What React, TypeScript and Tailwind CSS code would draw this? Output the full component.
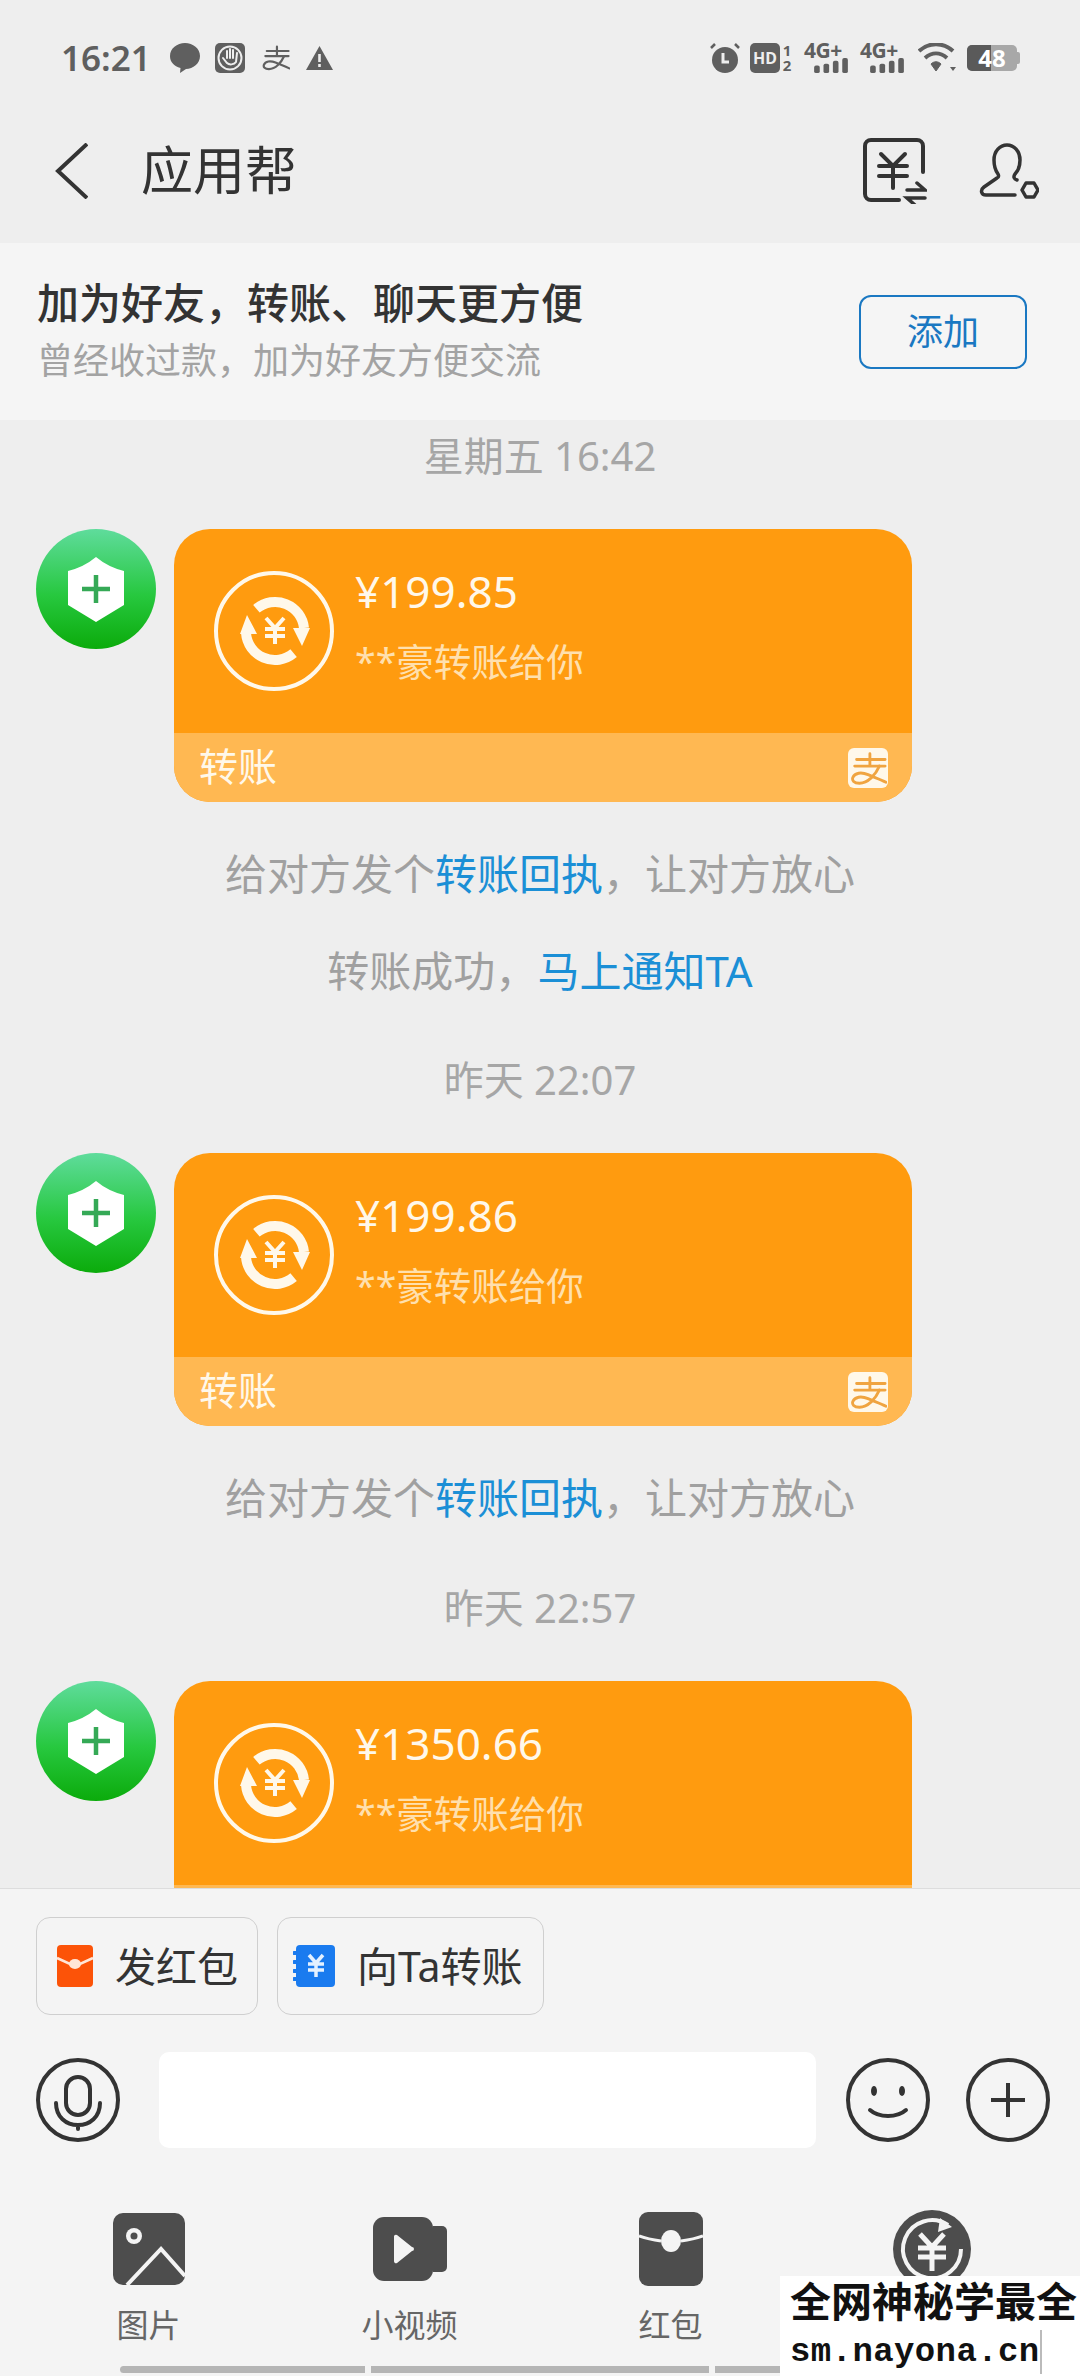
import type { ReactNode } from "react";

const GLYPH = "#5f5f5f";
const INK = "#333333";

function AlipayMark({ color, className }: { color: string; className?: string }) {
  return (
    <svg viewBox="0 0 40 40" className={className} fill="none" stroke={color} strokeLinecap="round">
      <path d="M8 11h30M22 5v13M6 18h32" strokeWidth="3" />
      <path d="M32 18C28 27 20 36 11 36 5 36 3 33 4 30 6 25 13 24 20 27 27 30 33 32 39 35" strokeWidth="3" />
    </svg>
  );
}

function SignalIcon() {
  return (
    <div className="flex h-[30px] w-[45px] flex-col items-start">
      <span className="h-[14px] text-[21px] leading-[14px] font-bold tracking-[-0.5px] text-[#5f5f5f]">4G+</span>
      <svg viewBox="0 0 36 16" className="mt-[1px] ml-[9px] h-[15px] w-[36px]" fill={GLYPH}>
        <rect x="0" y="8" width="6" height="8" rx="2" />
        <rect x="10" y="6" width="6" height="10" rx="2" />
        <rect x="20" y="3" width="6" height="13" rx="2" />
        <rect x="30" y="0" width="6" height="16" rx="2" />
      </svg>
    </div>
  );
}

function StatusBar() {
  return (
    <div className="flex h-[115px] items-center justify-between pr-[60px] pl-[61px]">
      <div className="flex items-center">
        <span className="text-[35px] leading-none font-semibold text-[#5f5f5f]">16:21</span>
        <svg viewBox="0 0 30 30" className="ml-[19px] h-[30px] w-[30px]" fill={GLYPH}>
          <path d="M15 0c8 0 15 5.500 15 13s-7 13-14 13l-6 4 .5-5C4 23 0 19 0 13 0 5.500 7 0 15 0z" />
        </svg>
        <svg viewBox="0 0 30 30" className="ml-[15px] h-[30px] w-[30px]" fill="none">
          <rect width="30" height="30" rx="5" fill={GLYPH} />
          <circle cx="15" cy="15" r="11.500" stroke="#eeeeee" strokeWidth="2" />
          <path
            d="M8 15l4 5c2 2 7 2 9-1l1-9M12 15V8M15 15V6M18 15V7"
            stroke="#eeeeee"
            strokeWidth="2"
            strokeLinecap="round"
          />
        </svg>
        <AlipayMark color={GLYPH} className="ml-[16px] h-[29px] w-[29px]" />
        <svg viewBox="0 0 27 24" className="ml-[16px] h-[24px] w-[27px]">
          <path d="M13.500 0L27 24H0z" fill={GLYPH} />
          <path d="M12.200 8h2.600v8h-2.600zM12.200 18h2.600v3h-2.600z" fill="#eeeeee" />
        </svg>
      </div>
      <div className="flex items-center">
        <svg viewBox="0 0 30 30" className="h-[30px] w-[30px]" fill="none">
          <circle cx="15" cy="17" r="13" fill={GLYPH} />
          <path d="M13 10v9h6" stroke="#eeeeee" strokeWidth="3" />
          <path d="M1 5l4-4M29 5l-4-4" stroke={GLYPH} strokeWidth="2.500" />
        </svg>
        <div className="ml-[10px] flex h-[30px] w-[30px] items-center justify-center rounded-[5px] bg-[#5f5f5f] text-[16px] leading-none font-bold text-[#eeeeee]">
          HD
        </div>
        <div className="ml-[2px] flex w-[10px] flex-col items-center text-[15px] leading-[15px] font-bold text-[#5f5f5f]">
          <span>1</span>
          <span>2</span>
        </div>
        <div className="ml-[12px]">
          <SignalIcon />
        </div>
        <div className="ml-[11px]">
          <SignalIcon />
        </div>
        <svg viewBox="0 0 38 30" className="ml-[13px] h-[30px] w-[38px]" fill="none" stroke={GLYPH}>
          <path d="M1 8c10-9 24-9 34 0" strokeWidth="4" />
          <path d="M7 15c7-6 15-6 22 0" strokeWidth="4" />
          <path d="M13 21c3-3 7-3 10 0l-5 7z" fill={GLYPH} strokeWidth="1" />
          <path d="M32 24h6l-3 4z" fill={GLYPH} strokeWidth="0" />
        </svg>
        <div className="relative ml-[11px] flex h-[26px] w-[50px] rounded-[5px] bg-[#a8a8a8]">
          <div className="h-full w-[24px] rounded-l-[5px] bg-[#5a5a5a]" />
          <span className="absolute inset-0 flex items-center justify-center text-[24px] leading-none font-bold text-white">
            48
          </span>
        </div>
        <div className="h-[12px] w-[3px] rounded-r-[2px] bg-[#a8a8a8]" />
      </div>
    </div>
  );
}

function Header() {
  return (
    <div className="flex h-[128px] items-center justify-between pr-[41px] pb-[16px] pl-[55px]">
      <div className="flex items-center">
        <svg viewBox="0 0 33 56" className="h-[56px] w-[33px]" fill="none" stroke={INK} strokeWidth="4">
          <path d="M32 1L3 28l29 27" />
        </svg>
        <span className="ml-[53px] pb-[2px] text-[52px] leading-none text-[#333333]">应用帮</span>
      </div>
      <div className="flex items-center">
        <svg
          viewBox="0 0 64 66"
          className="h-[66px] w-[64px]"
          fill="none"
          stroke={INK}
          strokeWidth="4"
          strokeLinecap="round"
        >
          <path d="M36 62H8a6 6 0 0 1-6-6V8a6 6 0 0 1 6-6h46a6 6 0 0 1 6 6v26" />
          <path d="M18 16l12 12 12-12M16 28h28M16 38h28M30 28v22" />
          <path d="M44 52h18l-8-7M62 60H44l8 7" strokeWidth="3.500" />
        </svg>
        <svg
          viewBox="0 0 60 56"
          className="ml-[52px] h-[56px] w-[60px]"
          fill="none"
          stroke={INK}
          strokeWidth="3.500"
          strokeLinecap="round"
          strokeLinejoin="round"
        >
          <path d="M38 37c-3-1-4-3-2-6 3-3 5-8 5-14C41 8 35 2 28 2S15 8 15 17c0 6 1 10 4 14 1 2 1 3-1 4L5 44c-4 3-3 8 2 8h29" />
          <path d="M43 47l4-7h8l4 7-4 7h-8z" />
        </svg>
      </div>
    </div>
  );
}

function FriendBanner() {
  return (
    <div className="flex h-[177px] items-center justify-between bg-[#f5f5f5] pr-[53px] pl-[37px]">
      <div className="flex flex-col">
        <span className="text-[42px] leading-[50px] font-medium text-[#333333]">
          加为好友，转账、聊天更方便
        </span>
        <span className="mt-[8px] text-[36px] leading-[50px] text-[#a3a3a3]">
          曾经收过款，加为好友方便交流
        </span>
      </div>
      <button className="flex h-[74px] w-[168px] items-center justify-center rounded-[12px] border-2 border-[#1a78c2] text-[36px] text-[#1a78c2]">
        添加
      </button>
    </div>
  );
}

function Avatar() {
  return (
    <svg viewBox="0 0 120 120" className="h-[120px] w-[120px] shrink-0">
      <defs>
        <linearGradient id="avatarGreen" x1="0" y1="0" x2="0" y2="1">
          <stop offset="0" stopColor="#5fdc9c" />
          <stop offset="0.55" stopColor="#27c83f" />
          <stop offset="1" stopColor="#0bab0b" />
        </linearGradient>
      </defs>
      <circle cx="60" cy="60" r="60" fill="url(#avatarGreen)" />
      <path d="M60 28Q48 38 32 42V76L60 93 88 76V42Q72 38 60 28z" fill="#ffffff" />
      <path d="M46 60h28M60 46v28" stroke="#35a956" strokeWidth="4.500" />
    </svg>
  );
}

function TransferIcon() {
  return (
    <svg viewBox="0 0 120 120" className="h-[120px] w-[120px] shrink-0" fill="none" stroke="#fff8ea">
      <circle cx="60" cy="60" r="58" strokeWidth="4" />
      <path d="M42.400 37.800A29 29 0 0 1 90 57" strokeWidth="10" />
      <path d="M79.600 82.200A29 29 0 0 1 32 62" strokeWidth="10" />
      <path d="M79 57h17L88 75zM26 63h17L33 44z" fill="#fff8ea" strokeWidth="0" />
      <path d="M52 47l9 10 9-10M51 58h20M51 65h20M61 57v16" strokeWidth="4" />
    </svg>
  );
}

function TransferMessage({ amount, cutOff }: { amount: string; cutOff?: boolean }) {
  return (
    <div className="flex gap-[18px] pl-[36px]">
      <Avatar />
      <div className="w-[738px] overflow-hidden rounded-[36px] bg-[#ff9b0f]">
        <div className="flex h-[204px] items-center pl-[40px]">
          <TransferIcon />
          <div className="ml-[21px] flex flex-col pb-[10px]">
            <span className="text-[44px] leading-[50px] text-[#fff8ea]">{amount}</span>
            <span className="mt-[21px] text-[37.500px] leading-[50px] text-[#ffe0ae]">**豪转账给你</span>
          </div>
        </div>
        <div className="flex h-[69px] items-center justify-between bg-[#ffb852] pr-[24px] pl-[25px]">
          {!cutOff && (
            <>
              <span className="pb-[5px] text-[39px] leading-none text-[#fff8ea]">转账</span>
              <div className="flex h-[40px] w-[40px] items-center justify-center rounded-[6px] bg-[#fff8ea]">
                <AlipayMark color="#f0a440" className="h-[38px] w-[38px]" />
              </div>
            </>
          )}
        </div>
      </div>
    </div>
  );
}

function TimeLabel({ children, className }: { children: ReactNode; className: string }) {
  return <div className={`text-center text-[40px] leading-[50px] text-[#a6a6a6] ${className}`}>{children}</div>;
}

function Hint({ prefix, link, suffix, className }: { prefix: string; link: string; suffix?: string; className: string }) {
  return (
    <div className={`text-center text-[42px] leading-[50px] text-[#a0a0a0] ${className}`}>
      {prefix}
      <span className="text-[#1b8fd6]">{link}</span>
      {suffix}
    </div>
  );
}

function QuickButton({ icon, label, sizing }: { icon: ReactNode; label: string; sizing: string }) {
  return (
    <button className={`flex h-[98px] items-center rounded-[14px] border border-[#cfcfcf] ${sizing}`}>
      {icon}
      <span className="ml-[22px] text-[41px] leading-none text-[#333333]">{label}</span>
    </button>
  );
}

function ToolTab({ icon, label }: { icon: ReactNode; label?: string }) {
  return (
    <div className="flex flex-col items-center">
      <div className="flex h-[76px] items-center justify-center">{icon}</div>
      <span className="mt-[21px] h-[34px] text-[32px] leading-[34px] text-[#666666]">{label}</span>
    </div>
  );
}

function Composer() {
  return (
    <div className="relative flex h-[488px] shrink-0 flex-col border-t border-[#dddddd] bg-[#f4f4f4]">
      <div className="flex gap-[19px] pt-[28px] pl-[36px]">
        <QuickButton
          sizing="w-[222px] pl-[20px]"
          label="发红包"
          icon={
            <svg viewBox="0 0 36 42" className="h-[42px] w-[36px]">
              <rect width="36" height="42" rx="4" fill="#fc5308" />
              <path d="M0 13l13 6h10l13-6" stroke="#ffe6d8" strokeWidth="2.500" fill="none" />
              <ellipse cx="18" cy="19" rx="6" ry="5" fill="#ffe6d8" />
            </svg>
          }
        />
        <QuickButton
          sizing="w-[267px] pl-[15px]"
          label="向Ta转账"
          icon={
            <svg viewBox="0 0 42 42" className="h-[42px] w-[42px]">
              <rect x="3" width="39" height="42" rx="4" fill="#1a7bef" />
              <path d="M1 8h5M1 17h5M1 26h5M1 34h5" stroke="#1a7bef" strokeWidth="4" strokeLinecap="round" />
              <path d="M16 10l7 8 7-8M15 19h16M15 25h16M23 18v14" stroke="#e4f1ff" strokeWidth="3.500" fill="none" />
            </svg>
          }
        />
      </div>

      <div className="mt-[37px] flex h-[96px] items-center pl-[36px]">
        <svg viewBox="0 0 84 84" className="h-[84px] w-[84px]" fill="none" stroke={INK} strokeWidth="4" strokeLinecap="round">
          <circle cx="42" cy="42" r="40" />
          <rect x="30" y="19" width="24" height="38" rx="12" />
          <path d="M20 45c0 14 10 22 22 22s22-8 22-22M42 67v4" />
        </svg>
        <div className="ml-[39px] h-[96px] w-[657px] rounded-[10px] bg-white" />
        <svg viewBox="0 0 84 84" className="ml-[30px] h-[84px] w-[84px]" fill="none" stroke={INK} strokeWidth="4" strokeLinecap="round">
          <circle cx="42" cy="42" r="40" />
          <ellipse cx="28" cy="33" rx="3" ry="5" fill={INK} stroke="none" />
          <ellipse cx="56" cy="33" rx="3" ry="5" fill={INK} stroke="none" />
          <path d="M24 52c9 8 27 8 36 0" />
        </svg>
        <svg viewBox="0 0 84 84" className="ml-[36px] h-[84px] w-[84px]" fill="none" stroke={INK} strokeWidth="4">
          <circle cx="42" cy="42" r="40" />
          <path d="M25 42h34M42 25v34" />
        </svg>
      </div>

      <div className="mt-[63px] grid grid-cols-4 px-[18px]">
        <ToolTab
          label="图片"
          icon={
            <svg viewBox="0 0 72 72" className="h-[72px] w-[72px]">
              <rect width="72" height="72" rx="10" fill="#4d4d4d" />
              <circle cx="21" cy="23" r="8" fill="#f4f4f4" />
              <circle cx="21" cy="23" r="3.500" fill="#4d4d4d" />
              <path d="M14 72l34-36 24 27" fill="none" stroke="#f4f4f4" strokeWidth="4" />
            </svg>
          }
        />
        <ToolTab
          label="小视频"
          icon={
            <svg viewBox="0 0 74 64" className="h-[64px] w-[74px]" fill="#4d4d4d">
              <rect width="60" height="64" rx="11" />
              <path d="M60 9h9a5 5 0 0 1 5 5v36a5 5 0 0 1-5 5h-9z" />
              <path d="M21 20a2 2 0 0 1 3-2l15 12a2 2 0 0 1 0 4L24 46a2 2 0 0 1-3-2z" fill="#f4f4f4" />
            </svg>
          }
        />
        <ToolTab
          label="红包"
          icon={
            <svg viewBox="0 0 64 74" className="h-[74px] w-[64px]">
              <rect width="64" height="74" rx="9" fill="#4d4d4d" />
              <path d="M0 24c8 3 14 4 22 5M42 29c8-1 14-2 22-5" stroke="#f4f4f4" strokeWidth="3" fill="none" />
              <ellipse cx="32" cy="29" rx="10" ry="11" fill="#f4f4f4" />
            </svg>
          }
        />
        <ToolTab
          icon={
            <svg viewBox="0 0 78 78" className="h-[78px] w-[78px]" fill="none">
              <circle cx="39" cy="39" r="39" fill="#4d4d4d" />
              <path d="M55 15A29 29 0 1 0 68 39" stroke="#f4f4f4" strokeWidth="4" />
              <path d="M47 8l12 9-14 5z" fill="#f4f4f4" />
              <path d="M27 24l12 13 12-13M25 38h28M25 47h28M39 37v24" stroke="#f4f4f4" strokeWidth="5" />
            </svg>
          }
        />
      </div>

      <div className="mt-[24px] flex h-[7px] gap-[6px] pl-[120px]">
        <div className="w-[245px] rounded-l-full bg-[#b5b5b5]" />
        <div className="w-[338px] bg-[#b5b5b5]" />
        <div className="w-[338px] bg-[#b5b5b5]" />
      </div>

      <div className="absolute right-0 bottom-0 flex h-[100px] w-[300px] flex-col bg-white pl-[10px]">
        <span className="mt-[2px] text-[41px] leading-[46px] font-bold text-[#111111]">全网神秘学最全</span>
        <div className="mt-[6px] flex items-center">
          <span className="font-['Liberation_Mono',monospace] text-[34px] leading-[36px] font-bold tracking-[0.4px] text-[#111111]">
            sm.nayona.cn
          </span>
          <div className="h-[44px] w-[2px] bg-[#bbbbbb]" />
        </div>
      </div>
    </div>
  );
}

export default function App() {
  return (
    <main className="flex h-[2376px] w-[1080px] flex-col overflow-hidden bg-[#eeeeee] font-['Noto_Sans','Noto_Sans_CJK_SC',sans-serif]">
      <StatusBar />
      <Header />
      <FriendBanner />

      <section className="min-h-0 flex-1 overflow-hidden pt-[11px]">
        <TimeLabel className="mb-[48px]">星期五 16:42</TimeLabel>
        <TransferMessage amount="¥199.85" />
        <Hint className="mt-[47px]" prefix="给对方发个" link="转账回执" suffix="，让对方放心" />
        <Hint className="mt-[47px]" prefix="转账成功，" link="马上通知TA" />
        <TimeLabel className="mt-[59px] mb-[48px]">昨天 22:07</TimeLabel>
        <TransferMessage amount="¥199.86" />
        <Hint className="mt-[47px]" prefix="给对方发个" link="转账回执" suffix="，让对方放心" />
        <TimeLabel className="mt-[60px] mb-[48px]">昨天 22:57</TimeLabel>
        <TransferMessage amount="¥1350.66" cutOff />
      </section>

      <Composer />
    </main>
  );
}
